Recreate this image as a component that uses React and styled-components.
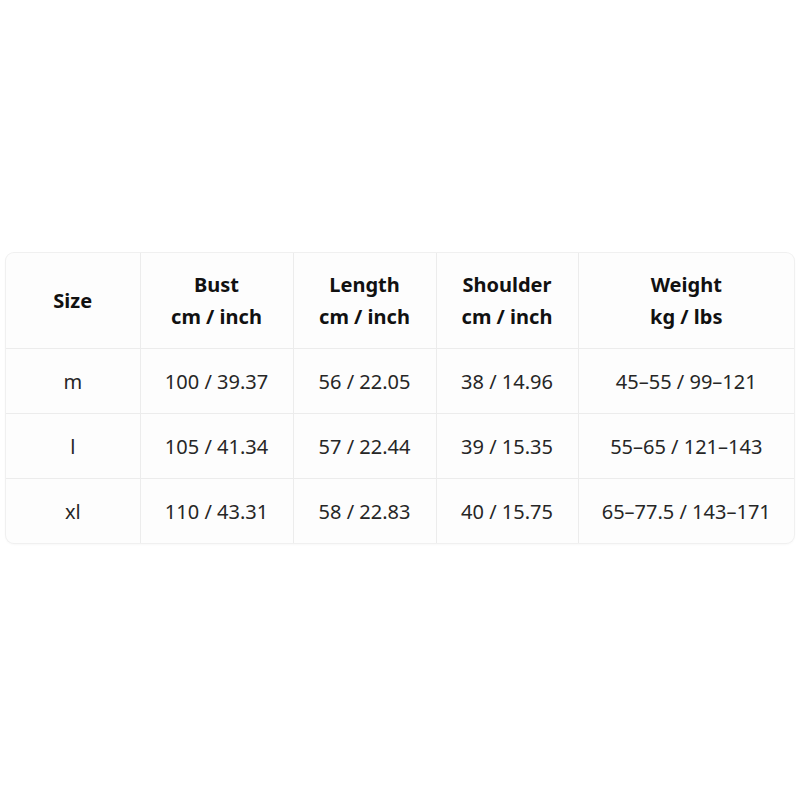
import React from 'react'
import styled, { createGlobalStyle } from 'styled-components'

const GlobalStyle = createGlobalStyle`
  html, body {
    margin: 0;
    padding: 0;
    background: #ffffff;
  }
`

const Page = styled.div`
  width: 800px;
  height: 800px;
  box-sizing: border-box;
  padding: 253px 6px 0 6px;
  font-family: 'Noto Sans', 'Open Sans', sans-serif;
  color: #1d1d1d;
`

const Card = styled.div`
  background: #fdfdfd;
  border-radius: 8px;
  box-shadow: 0 0 0 1px #f0f0f0, 0 1px 3px rgba(0, 0, 0, 0.06);
  overflow: hidden;
`

const Table = styled.table`
  width: 100%;
  border-collapse: collapse;
  table-layout: fixed;
  font-size: 20px;
`

const HeadCell = styled.th`
  height: 95px;
  padding: 0;
  font-weight: 700;
  line-height: 32px;
  text-align: center;
  vertical-align: middle;
  color: #111;
  border-left: 1px solid #ececec;
  border-bottom: 1px solid #ececec;
  &:first-child {
    border-left: none;
  }
`

const Cell = styled.td`
  height: 64px;
  padding: 0;
  text-align: center;
  vertical-align: middle;
  color: #262626;
  border-left: 1px solid #ececec;
  border-bottom: 1px solid #ececec;
  &:first-child {
    border-left: none;
  }
  tr:last-child & {
    border-bottom: none;
  }
`

const columns = [
  { width: 134, title: 'Size' },
  { width: 153, title: 'Bust', unit: 'cm / inch' },
  { width: 143, title: 'Length', unit: 'cm / inch' },
  { width: 142, title: 'Shoulder', unit: 'cm / inch' },
  { width: 216, title: 'Weight', unit: 'kg / lbs' },
]

const rows = [
  ['m', '100 / 39.37', '56 / 22.05', '38 / 14.96', '45–55 / 99–121'],
  ['l', '105 / 41.34', '57 / 22.44', '39 / 15.35', '55–65 / 121–143'],
  ['xl', '110 / 43.31', '58 / 22.83', '40 / 15.75', '65–77.5 / 143–171'],
]

export default function App() {
  return (
    <Page>
      <GlobalStyle />
      <Card>
        <Table>
          <colgroup>
            {columns.map((c) => (
              <col key={c.title} style={{ width: c.width }} />
            ))}
          </colgroup>
          <thead>
            <tr>
              {columns.map((c) => (
                <HeadCell key={c.title}>
                  {c.title}
                  {c.unit && (
                    <>
                      <br />
                      {c.unit}
                    </>
                  )}
                </HeadCell>
              ))}
            </tr>
          </thead>
          <tbody>
            {rows.map((r) => (
              <tr key={r[0]}>
                {r.map((v, i) => (
                  <Cell key={i}>{v}</Cell>
                ))}
              </tr>
            ))}
          </tbody>
        </Table>
      </Card>
    </Page>
  )
}
